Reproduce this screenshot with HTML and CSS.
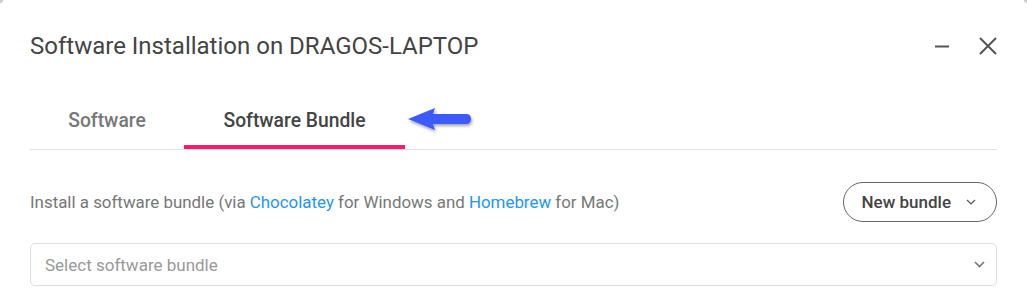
FILE: index.html
```html
<!DOCTYPE html>
<html>
<head>
<meta charset="utf-8">
<link rel="stylesheet" href="styles.css">
</head>
<body>
<div class="dialog">
  <div class="header">
    <h1 class="title">Software Installation on DRAGOS-LAPTOP</h1>
    <div class="actions">
      <span class="icon-btn">
        <svg width="14" height="14" viewBox="0 0 14 14"><path d="M0 7.5h14" stroke="#555" stroke-width="2"/></svg>
      </span>
      <span class="icon-btn">
        <svg width="18" height="18" viewBox="0 0 18 18"><path d="M1 1L17 17M17 1L1 17" stroke="#555" stroke-width="2"/></svg>
      </span>
    </div>
  </div>
  <div class="tabs">
    <div class="tab tab-sw">Software</div>
    <div class="tab tab-bundle active">Software Bundle
      <svg class="arrow" width="72" height="34" viewBox="0 0 72 34">
        <defs>
          <filter id="sh" x="-20%" y="-40%" width="140%" height="200%">
            <feDropShadow dx="1" dy="2" stdDeviation="1.5" flood-color="#000" flood-opacity="0.35"/>
          </filter>
        </defs>
        <g filter="url(#sh)">
          <path d="M2 15 L29 4 L27 10 L60 10 Q65 10 65 15 Q65 20 60 20 L27 20 L29 26 Z" fill="#3d5afe"/>
        </g>
      </svg>
    </div>
  </div>
  <div class="row">
    <p class="desc">Install a software bundle (via <a class="link">Chocolatey</a> for Windows and <a class="link">Homebrew</a> for Mac)</p>
    <button class="pill">New bundle
      <svg width="10" height="6" viewBox="0 0 10 6"><path d="M1 1L5 5L9 1" stroke="#555" stroke-width="1.2" fill="none"/></svg>
    </button>
  </div>
  <div class="select">
    <span class="placeholder">Select software bundle</span>
    <svg width="11" height="7" viewBox="0 0 11 7"><path d="M1 1L5.5 5.5L10 1" stroke="#777" stroke-width="1.6" fill="none"/></svg>
  </div>
</div>
</body>
</html>
```

FILE: styles.css
```css
html, body {
  margin: 0;
  padding: 0;
  background: #fff;
}
body {
  font-family: Roboto, "Liberation Sans", sans-serif;
}
.dialog {
  width: 1027px;
  height: 298px;
  box-sizing: border-box;
  padding: 0 30px;
  background: #fff;
  position: relative;
  overflow: hidden;
}
.dialog::before, .dialog::after {
  content: "";
  position: absolute;
  top: 0;
  width: 3px;
  height: 3px;
  background: #ccc;
}
.dialog::before { left: 0; border-bottom-right-radius: 3px; }
.dialog::after { right: 0; border-bottom-left-radius: 3px; }
.header {
  display: flex;
  align-items: center;
  justify-content: space-between;
  height: 92px;
}
.title {
  margin: 0;
  font-size: 24px;
  font-weight: 400;
  color: #444;
}
.actions {
  display: flex;
  align-items: center;
  gap: 30px;
}
.icon-btn {
  display: flex;
  align-items: center;
  justify-content: center;
}
.tabs {
  display: flex;
  border-bottom: 1px solid #e0e0e0;
  height: 58px;
  box-sizing: border-box;
}
.tab {
  position: relative;
  display: flex;
  align-items: center;
  justify-content: center;
  font-size: 19.3px;
  font-weight: 500;
  color: #777;
  height: 57px;
  box-sizing: border-box;
}
.tab-sw { width: 154px; }
.tab-bundle { width: 221px; }
.tab.active {
  color: #444;
}
.tab.active::after {
  content: "";
  position: absolute;
  left: 0;
  right: 0;
  bottom: 0;
  height: 4px;
  background: #ff1a6b;
}
.arrow {
  position: absolute;
  left: 222px;
  top: 12px;
}
.row {
  display: flex;
  align-items: center;
  justify-content: space-between;
  margin-top: 32px;
}
.desc {
  margin: 0;
  font-size: 16.9px;
  color: #777;
}
.link {
  color: #2196f3;
  text-decoration: none;
}
.pill {
  display: flex;
  align-items: center;
  gap: 15px;
  height: 40px;
  box-sizing: border-box;
  padding: 0 20px 0 18px;
  border: 1px solid #666;
  border-radius: 20px;
  background: #fff;
  font-family: Roboto, "Liberation Sans", sans-serif;
  font-size: 17px;
  font-weight: 500;
  color: #444;
}
.select {
  margin-top: 21px;
  height: 43px;
  box-sizing: border-box;
  border: 1px solid #ddd;
  border-radius: 5px;
  display: flex;
  align-items: center;
  justify-content: space-between;
  padding: 0 11px 0 14px;
}
.placeholder {
  font-size: 17px;
  color: #999;
}
```
